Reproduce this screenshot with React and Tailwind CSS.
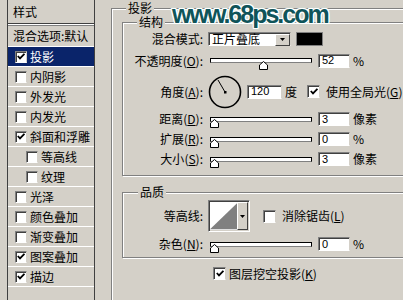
import React from "react";

const layers = [
  { label: "投影", checked: true, selected: true },
  { label: "内阴影" },
  { label: "外发光" },
  { label: "内发光" },
  { label: "斜面和浮雕", checked: true },
  { label: "等高线", indent: true },
  { label: "纹理", indent: true },
  { label: "光泽" },
  { label: "颜色叠加" },
  { label: "渐变叠加" },
  { label: "图案叠加", checked: true },
  { label: "描边", checked: true },
];

function Check({ checked, small }) {
  return (
    <span
      className={
        (small ? "w-[12px] h-[12px] " : "w-[13px] h-[13px] ") +
        "shrink-0 bg-white border border-t-[#808080] border-l-[#808080] border-b-white border-r-[#d4d0c8] shadow-[inset_1px_1px_0_#404040] flex items-center justify-center"
      }
    >
      {checked && (
        <svg width="8" height="7" viewBox="0 0 8 7">
          <path d="M0.8 3 L3 5.4 L7.4 0.8" fill="none" stroke="#000" strokeWidth="1.8" />
        </svg>
      )}
    </span>
  );
}

function Field({ value, wide }) {
  return (
    <div
      className={
        (wide ? "w-[35px] " : "w-[32px] ") +
        "h-[14px] shrink-0 bg-white border border-t-[#808080] border-l-[#808080] border-b-white border-r-[#d4d0c8] shadow-[inset_1px_1px_0_#404040] pl-[3px] flex items-center text-[11px] leading-none font-['Liberation_Sans',sans-serif]"
      }
    >
      {value}
    </div>
  );
}

function Slider({ pct }) {
  return (
    <div className="relative ml-[7px] w-[102px] h-[14px] shrink-0 flex items-center">
      <div className="w-full h-[5px] border border-black border-b-[#808080] bg-white" />
      <svg
        className="absolute top-[7px]"
        style={{ left: Math.round(pct * 0.95) + "px" }}
        width="9"
        height="9"
        viewBox="0 0 9 9"
      >
        <path d="M0.5 4 L4.5 0.5 L8.5 4 L8.5 8.5 L0.5 8.5 Z" fill="#fff" stroke="#000" />
      </svg>
    </div>
  );
}

function Label({ children }) {
  return <div className="w-[80px] shrink-0 text-right leading-none whitespace-nowrap">{children}</div>;
}

function Key({ k }) {
  return (
    <>
      (<span className="underline">{k}</span>)
    </>
  );
}

function SliderRow({ label, pct, value, unit, top }) {
  return (
    <div className={"flex items-center h-[14px] " + top}>
      <Label>{label}</Label>
      <Slider pct={pct} />
      <div className="ml-[6px]">
        <Field value={value} />
      </div>
      <span className="ml-[3px] leading-none">{unit}</span>
    </div>
  );
}

function Dial() {
  return (
    <svg width="34" height="34" viewBox="0 0 34 34" className="ml-[5px] shrink-0">
      <circle cx="17" cy="17" r="15.5" fill="none" stroke="#000" strokeWidth="1.6" />
      <line x1="17" y1="17" x2="10" y2="5" stroke="#000" strokeWidth="1" />
      <rect x="16" y="16" width="2.5" height="2.5" fill="#000" />
    </svg>
  );
}

export default function App() {
  return (
    <div className="relative w-[403px] h-[300px] overflow-hidden bg-[#d4d0c8] flex font-['Noto_Sans_CJK_SC',sans-serif] text-[12px] text-black">
      {/* left list */}
      <aside className="ml-[7px] w-[88px] shrink-0 border-x border-[#404040] flex flex-col">
        <div className="h-[23px] pl-[5px] flex items-center leading-none">样式</div>
        <div className="h-[3px] border-t border-t-[#404040] border-b border-b-[#808080] bg-white" />
        <div className="h-[21px] pl-[5px] flex items-center border-b border-white leading-none whitespace-nowrap">
          混合选项:默认
        </div>
        {layers.map((l) => (
          <div
            key={l.label}
            className={
              "h-[20px] border-b border-white flex items-center gap-[3px] leading-none whitespace-nowrap " +
              (l.indent ? "pl-[18px] " : "pl-[7px] ") +
              (l.selected ? "bg-[#0a246a] text-white" : "")
            }
          >
            <Check small checked={l.checked} />
            <span>{l.label}</span>
          </div>
        ))}
      </aside>

      {/* right settings */}
      <div className="ml-[16px] shrink-0">
        <fieldset className="w-[310px] border border-[#808080] shadow-[inset_1px_1px_0_#fff] pb-[40px]">
          <legend className="ml-[14px] px-[2px] leading-[16px] bg-[#d4d0c8]">投影</legend>
          <div className="pl-[10px] -mt-[2px] flex flex-col">
            {/* 结构 */}
            <fieldset className="w-[300px] border border-[#808080] shadow-[inset_1px_1px_0_#fff,1px_1px_0_#fff]">
              <legend className="ml-[14px] px-[2px] leading-[16px] bg-[#d4d0c8]">结构</legend>
              <div className="flex flex-col pb-[9px]">
                <div className="flex items-center h-[14px] mt-[2px]">
                  <Label>混合模式:</Label>
                  <div className="ml-[5px] w-[83px] h-[14px] shrink-0 bg-white border border-t-[#808080] border-l-[#808080] border-b-white border-r-[#d4d0c8] shadow-[inset_1px_1px_0_#404040] flex items-center">
                    <span className="pl-[3px] flex-1 leading-none">正片叠底</span>
                    <div className="w-[15px] h-[12px] mt-[1px] bg-[#d4d0c8] border border-t-white border-l-white border-b-[#404040] border-r-[#404040] flex items-center justify-center">
                      <svg width="5" height="3" viewBox="0 0 5 3">
                        <path d="M0 0 H5 L2.5 3 Z" fill="#000" />
                      </svg>
                    </div>
                  </div>
                  <div className="ml-[5px] w-[27px] h-[14px] bg-black border border-[#808080]" />
                </div>

                <div className="flex items-center h-[15px] mt-[7px]">
                  <Label>
                    不透明度<Key k="O" />:
                  </Label>
                  <Slider pct={52} />
                  <div className="ml-[6px]">
                    <Field value="52" />
                  </div>
                  <span className="ml-[3px] leading-none">%</span>
                </div>

                <div className="flex items-center h-[33px] mt-[7px]">
                  <Label>
                    角度<Key k="A" />:
                  </Label>
                  <Dial />
                  <div className="ml-[5px]">
                    <Field value="120" wide />
                  </div>
                  <span className="ml-[3px] leading-none">度</span>
                  <span className="ml-[10px]">
                    <Check checked />
                  </span>
                  <span className="ml-[6px] leading-none whitespace-nowrap">
                    使用全局光<Key k="G" />
                  </span>
                </div>

                <SliderRow label={<>距离<Key k="D" />:</>} pct={0} value="3" unit="像素" top="mt-[4px]" />
                <SliderRow label={<>扩展<Key k="R" />:</>} pct={0} value="0" unit="%" top="mt-[6px]" />
                <SliderRow label={<>大小<Key k="S" />:</>} pct={0} value="3" unit="像素" top="mt-[6px]" />
              </div>
            </fieldset>

            {/* 品质 */}
            <fieldset className="mt-[8px] w-[300px] border border-[#808080] shadow-[inset_1px_1px_0_#fff,1px_1px_0_#fff]">
              <legend className="ml-[15px] px-[2px] leading-[16px] bg-[#d4d0c8]">品质</legend>
              <div className="flex flex-col pb-[6px]">
                <div className="flex items-center h-[32px]">
                  <Label>等高线:</Label>
                  <div className="ml-[5px] w-[42px] h-[32px] shrink-0 flex border border-t-[#808080] border-l-[#808080] border-b-white border-r-white shadow-[inset_1px_1px_0_#404040] p-[1px]">
                    <svg width="29" height="28" viewBox="0 0 29 28" className="bg-white">
                      <path d="M0 28 L29 0 L29 28 Z" fill="#808080" />
                    </svg>
                    <div className="w-[11px] bg-[#d4d0c8] border border-t-white border-l-white border-b-[#404040] border-r-[#404040] flex items-center justify-center">
                      <svg width="5" height="3" viewBox="0 0 5 3">
                        <path d="M0 0 H5 L2.5 3 Z" fill="#000" />
                      </svg>
                    </div>
                  </div>
                  <span className="ml-[13px]">
                    <Check />
                  </span>
                  <span className="ml-[6px] leading-none whitespace-nowrap">
                    消除锯齿<Key k="L" />
                  </span>
                </div>
                <SliderRow label={<>杂色<Key k="N" />:</>} pct={0} value="0" unit="%" top="mt-[5px]" />
              </div>
            </fieldset>

            <div className="flex items-center h-[13px] mt-[9px] pl-[91px]">
              <Check checked />
              <span className="ml-[3px] leading-none whitespace-nowrap">
                图层挖空投影<Key k="K" />
              </span>
            </div>
          </div>
        </fieldset>
      </div>

      {/* watermark */}
      <div className="absolute left-[172px] top-[0px] text-[25px] leading-[28px] font-bold tracking-[-2px] font-['Liberation_Sans',sans-serif] text-[#0f5459] [text-shadow:1px_0_0_#fff,-1px_0_0_#fff,0_1px_0_#fff,0_-1px_0_#fff,1px_1px_0_#fff,-1px_-1px_0_#fff,1px_-1px_0_#fff,-1px_1px_0_#fff,0_0_3px_#bfe]">
        www.68ps.com
      </div>
    </div>
  );
}
